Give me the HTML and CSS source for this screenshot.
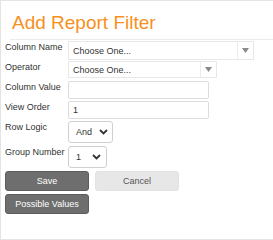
FILE: index.html
```html
<!DOCTYPE html>
<html lang="en">
<head>
  <meta charset="UTF-8" />
  <title>Add Report Filter</title>
  <link rel="stylesheet" href="styles.css">
</head>
<body>

  <div class="dialog">
    <div class="header">
      <h1>Add Report Filter</h1>
    </div>

    <div class="form">
      <div class="row r-colname">
        <label>Column Name</label>
        <div class="combo combo-wide">
          <span class="combo-text">Choose One...</span>
          <span class="combo-btn"><svg width="7" height="5" viewBox="0 0 7 5"><path d="M0 0h7L3.5 5z" fill="#8a8a8a"/></svg></span>
        </div>
      </div>

      <div class="row r-operator">
        <label>Operator</label>
        <div class="combo combo-mid">
          <span class="combo-text">Choose One...</span>
          <span class="combo-btn"><svg width="7" height="5" viewBox="0 0 7 5"><path d="M0 0h7L3.5 5z" fill="#8a8a8a"/></svg></span>
        </div>
      </div>

      <div class="row r-value">
        <label>Column Value</label>
        <div class="text-input"></div>
      </div>

      <div class="row r-order">
        <label>View Order</label>
        <div class="text-input">1</div>
      </div>

      <div class="row r-logic">
        <label>Row Logic</label>
        <div class="select select-logic">
          <span>And</span>
          <svg width="9" height="6" viewBox="0 0 9 6"><path d="M1 1l3.5 3.5L8 1" fill="none" stroke="#333" stroke-width="1.8"/></svg>
        </div>
      </div>

      <div class="row r-group">
        <label>Group Number</label>
        <div class="select select-group">
          <span>1</span>
          <svg width="9" height="6" viewBox="0 0 9 6"><path d="M1 1l3.5 3.5L8 1" fill="none" stroke="#333" stroke-width="1.8"/></svg>
        </div>
      </div>

      <div class="buttons">
        <button class="btn btn-dark">Save</button>
        <button class="btn btn-light">Cancel</button>
      </div>
      <div class="buttons">
        <button class="btn btn-dark">Possible Values</button>
      </div>
    </div>
  </div>

</body>
</html>
```

FILE: styles.css
```css
* {
  box-sizing: border-box;
}

body {
  margin: 0;
  font-family: 'Liberation Sans', Arial, sans-serif;
  background: #fff;
  color: #333;
}

.dialog {
  width: 273px;
  height: 240px;
  border: 1px solid #e4e4e4;
  border-right: none;
}

.header {
  height: 39px;
  margin-left: 9px;
  border-bottom: 1px solid #ebebeb;
}

.header h1 {
  margin: 0;
  padding: 12px 0 0 2px;
  font-size: 19px;
  line-height: 19px;
  font-weight: 400;
  color: #f7901e;
}

.form {
  padding: 1px 0 0 4px;
}

.row {
  display: flex;
  align-items: flex-start;
}

.row label {
  width: 63px;
  padding-top: 1px;
  font-size: 9px;
  line-height: 11px;
  color: #333;
}

.r-colname { height: 20px; }
.r-operator { height: 20px; }
.r-value { height: 20px; }
.r-order { height: 20px; }
.r-logic { height: 25px; }
.r-group { height: 25px; }

.combo {
  display: flex;
  align-items: center;
  border: 1px solid #e8e8e8;
  font-size: 9px;
  color: #333;
}

.combo-wide {
  width: 186px;
  height: 19px;
}

.combo-mid {
  width: 149px;
  height: 17px;
}

.combo-text {
  flex: 1;
  padding-left: 4px;
}

.combo-btn {
  width: 16px;
  height: 100%;
  border-left: 1px solid #ececec;
  display: flex;
  align-items: center;
  justify-content: center;
}

.text-input {
  width: 141px;
  height: 18px;
  border: 1px solid #dcdcdc;
  border-radius: 2px;
  padding-left: 4px;
  font-size: 9px;
  line-height: 16px;
  color: #333;
}

.select {
  display: flex;
  align-items: center;
  justify-content: space-between;
  height: 22px;
  border: 1px solid #cfcfcf;
  border-radius: 3px;
  font-size: 9px;
  color: #333;
}

.select-logic {
  width: 45px;
  padding: 0 4px 0 7px;
}

.select-group {
  width: 39px;
  padding: 0 5px 0 7px;
}

.buttons {
  display: flex;
  gap: 6px;
  margin-bottom: 3px;
}

.btn {
  width: 84px;
  height: 20px;
  border-radius: 3px;
  font-family: 'Liberation Sans', Arial, sans-serif;
  font-size: 9px;
  padding: 0;
  cursor: pointer;
}

.btn-dark {
  background: #6e6e6e;
  border: 1px solid #5c5c5c;
  color: #fff;
}

.btn-light {
  background: #e7e7e7;
  border: 1px solid #e2e2e2;
  color: #555;
}
```
